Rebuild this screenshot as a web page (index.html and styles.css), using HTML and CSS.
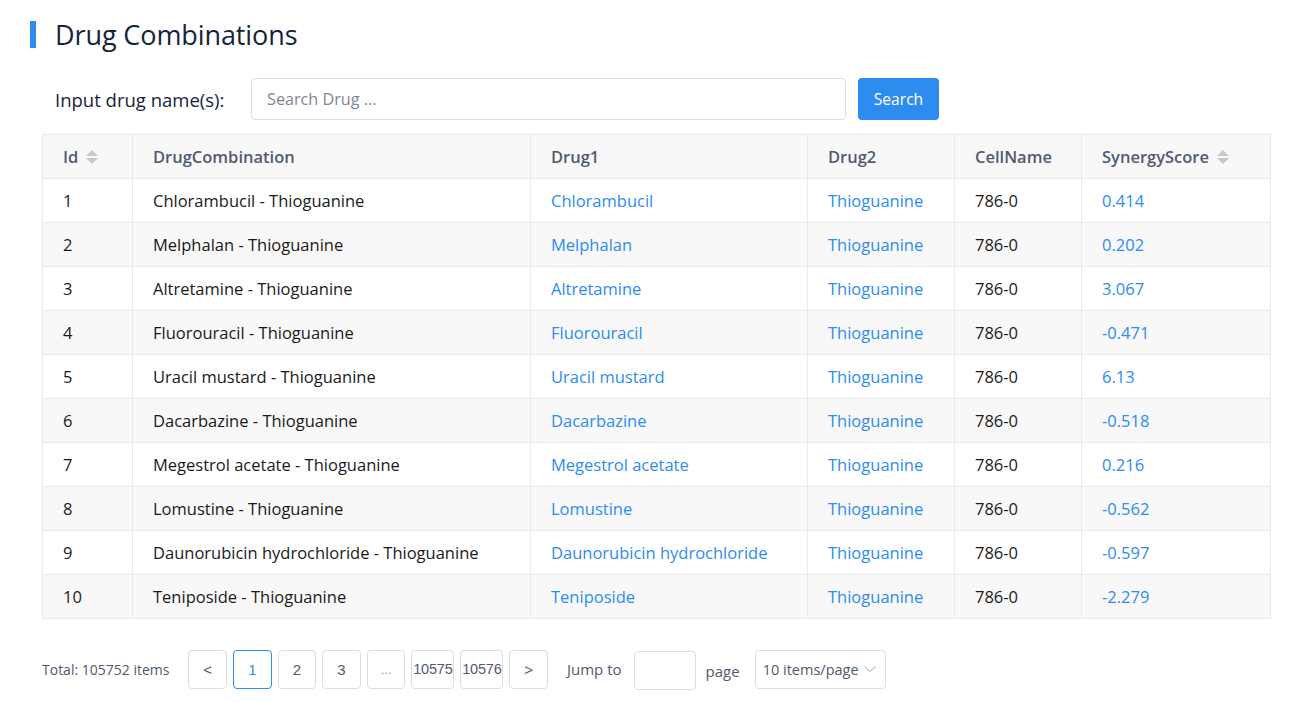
FILE: index.html
```html
<!DOCTYPE html>
<html>
<head>
<meta charset="utf-8">
<link rel="stylesheet" href="styles.css">
</head>
<body>
<div class="page">
  <div class="title">
    <span class="bar"></span>
    <h1>Drug Combinations</h1>
  </div>
  <div class="search">
    <label>Input drug name(s):</label>
    <input class="search-input" type="text" placeholder="Search Drug ...">
    <button class="btn-primary">Search</button>
  </div>
  <table class="grid">
    <colgroup>
      <col class="c1"><col class="c2"><col class="c3"><col class="c4"><col class="c5"><col class="c6">
    </colgroup>
    <thead>
      <tr>
        <th><span class="th-in">Id <span class="sorter"><i class="up"></i><i class="down"></i></span></span></th>
        <th>DrugCombination</th>
        <th>Drug1</th>
        <th>Drug2</th>
        <th>CellName</th>
        <th><span class="th-in">SynergyScore <span class="sorter"><i class="up"></i><i class="down"></i></span></span></th>
      </tr>
    </thead>
    <tbody>
      <tr><td>1</td><td>Chlorambucil - Thioguanine</td><td><a>Chlorambucil</a></td><td><a>Thioguanine</a></td><td>786-0</td><td><a>0.414</a></td></tr>
      <tr><td>2</td><td>Melphalan - Thioguanine</td><td><a>Melphalan</a></td><td><a>Thioguanine</a></td><td>786-0</td><td><a>0.202</a></td></tr>
      <tr><td>3</td><td>Altretamine - Thioguanine</td><td><a>Altretamine</a></td><td><a>Thioguanine</a></td><td>786-0</td><td><a>3.067</a></td></tr>
      <tr><td>4</td><td>Fluorouracil - Thioguanine</td><td><a>Fluorouracil</a></td><td><a>Thioguanine</a></td><td>786-0</td><td><a>-0.471</a></td></tr>
      <tr><td>5</td><td>Uracil mustard - Thioguanine</td><td><a>Uracil mustard</a></td><td><a>Thioguanine</a></td><td>786-0</td><td><a>6.13</a></td></tr>
      <tr><td>6</td><td>Dacarbazine - Thioguanine</td><td><a>Dacarbazine</a></td><td><a>Thioguanine</a></td><td>786-0</td><td><a>-0.518</a></td></tr>
      <tr><td>7</td><td>Megestrol acetate - Thioguanine</td><td><a>Megestrol acetate</a></td><td><a>Thioguanine</a></td><td>786-0</td><td><a>0.216</a></td></tr>
      <tr><td>8</td><td>Lomustine - Thioguanine</td><td><a>Lomustine</a></td><td><a>Thioguanine</a></td><td>786-0</td><td><a>-0.562</a></td></tr>
      <tr><td>9</td><td>Daunorubicin hydrochloride - Thioguanine</td><td><a>Daunorubicin hydrochloride</a></td><td><a>Thioguanine</a></td><td>786-0</td><td><a>-0.597</a></td></tr>
      <tr><td>10</td><td>Teniposide - Thioguanine</td><td><a>Teniposide</a></td><td><a>Thioguanine</a></td><td>786-0</td><td><a>-2.279</a></td></tr>
    </tbody>
  </table>
  <div class="pager">
    <span class="total">Total: 105752 items</span>
    <ul class="pages">
      <li>&lt;</li>
      <li class="active">1</li>
      <li>2</li>
      <li>3</li>
      <li class="dots">...</li>
      <li class="wide">10575</li>
      <li class="wide">10576</li>
      <li>&gt;</li>
    </ul>
    <span class="jump">Jump to</span>
    <input class="jump-input" type="text">
    <span class="jump-page">page</span>
    <div class="select">
      <span>10 items/page</span>
      <svg class="chev" width="14" height="14" viewBox="0 0 14 14"><path d="M1.5 4.5 L7 9.5 L12.5 4.5" fill="none" stroke="#c5c8ce" stroke-width="1.2"/></svg>
    </div>
  </div>
</div>
</body>
</html>
```
FILE: styles.css
```css
* { box-sizing: border-box; }
body {
  margin: 0;
  background: #fff;
  font-family: "Open Sans", "Noto Sans", sans-serif;
  color: #1a1a1a;
}
.page {
  padding: 18px 30px 0 42px;
}
.title {
  display: flex;
  align-items: center;
  margin-left: -12px;
  height: 32px;
}
.bar {
  width: 6px;
  height: 27px;
  background: #2d8cf0;
  margin-right: 19px;
}
h1 {
  margin: 0;
  font-size: 27px;
  font-weight: 400;
  color: #17233d;
  letter-spacing: -0.1px;
}
.search {
  display: flex;
  align-items: center;
  margin-top: 28px;
  margin-left: 13px;
  height: 42px;
}
.search label {
  font-size: 18.5px;
  width: 196px;
  color: #17233d;
  white-space: nowrap;
}
.search-input {
  width: 595px;
  height: 42px;
  border: 1px solid #dcdee2;
  border-radius: 4px;
  padding: 0 15px;
  font-family: inherit;
  font-size: 16.2px;
  color: #515a6e;
  outline: none;
}
.search-input::placeholder { color: #808695; }
.btn-primary {
  margin-left: 12px;
  width: 81px;
  height: 42px;
  border: none;
  border-radius: 4px;
  background: #2d8cf0;
  color: #fff;
  font-family: inherit;
  font-size: 15.6px;
}
.grid {
  margin-top: 14px;
  border-collapse: collapse;
  width: 1228px;
  table-layout: fixed;
  font-size: 16.5px;
}
.c1 { width: 90px; }
.c2 { width: 398px; }
.c3 { width: 277px; }
.c4 { width: 147px; }
.c5 { width: 127px; }
.c6 { width: 189px; }
.grid th, .grid td {
  border: 1px solid #e8eaec;
  height: 44px;
  padding: 0 20px;
  text-align: left;
  white-space: nowrap;
}
.grid th {
  background: #f8f8f9;
  color: #515a6e;
  font-weight: 600;
}
.grid tbody tr:nth-child(even) td { background: #f8f8f9; }
.grid a { color: #2d8cf0; text-decoration: none; }
.th-in { display: inline-flex; align-items: center; }
.sorter {
  display: inline-flex;
  flex-direction: column;
  margin-left: 8px;
  gap: 2px;
}
.sorter i {
  width: 0; height: 0;
  border-left: 6px solid transparent;
  border-right: 6px solid transparent;
}
.sorter .up { border-bottom: 6px solid #c5c8ce; }
.sorter .down { border-top: 6px solid #c5c8ce; }
.pager {
  display: flex;
  align-items: center;
  margin-top: 29px;
  font-size: 14px;
  color: #515a6e;
}
.total { margin-right: 19px; }
.pages {
  display: flex;
  gap: 6px;
  list-style: none;
  margin: 0;
  padding: 0;
}
.pages li {
  width: 38.6px;
  height: 39px;
  border: 1px solid #dcdee2;
  border-radius: 4px;
  display: flex;
  align-items: center;
  justify-content: center;
  font-size: 15px;
  color: #515a6e;
  font-family: "Liberation Sans", sans-serif;
}
.pages li.wide { padding: 0; width: 43px; font-size: 14.5px; letter-spacing: -0.2px; }
.pages li.active { border-color: #2d8cf0; color: #2d8cf0; }
.pages li.dots { color: #999; font-size: 13px; }
.jump { margin-left: 19px; font-size: 15px; white-space: nowrap; }
.jump-input {
  margin-left: 12px;
  width: 62px;
  height: 39px;
  border: 1px solid #dcdee2;
  border-radius: 4px;
  margin-top: 3px;
}
.jump-page { margin-left: 10px; font-size: 15px; margin-top: 3px; }
.select {
  margin-left: 15px;
  width: 131px;
  height: 39px;
  border: 1px solid #dcdee2;
  border-radius: 4px;
  display: flex;
  align-items: center;
  justify-content: space-between;
  padding: 0 8px 0 7px;
  font-size: 14.5px;
  white-space: nowrap;
}
```
